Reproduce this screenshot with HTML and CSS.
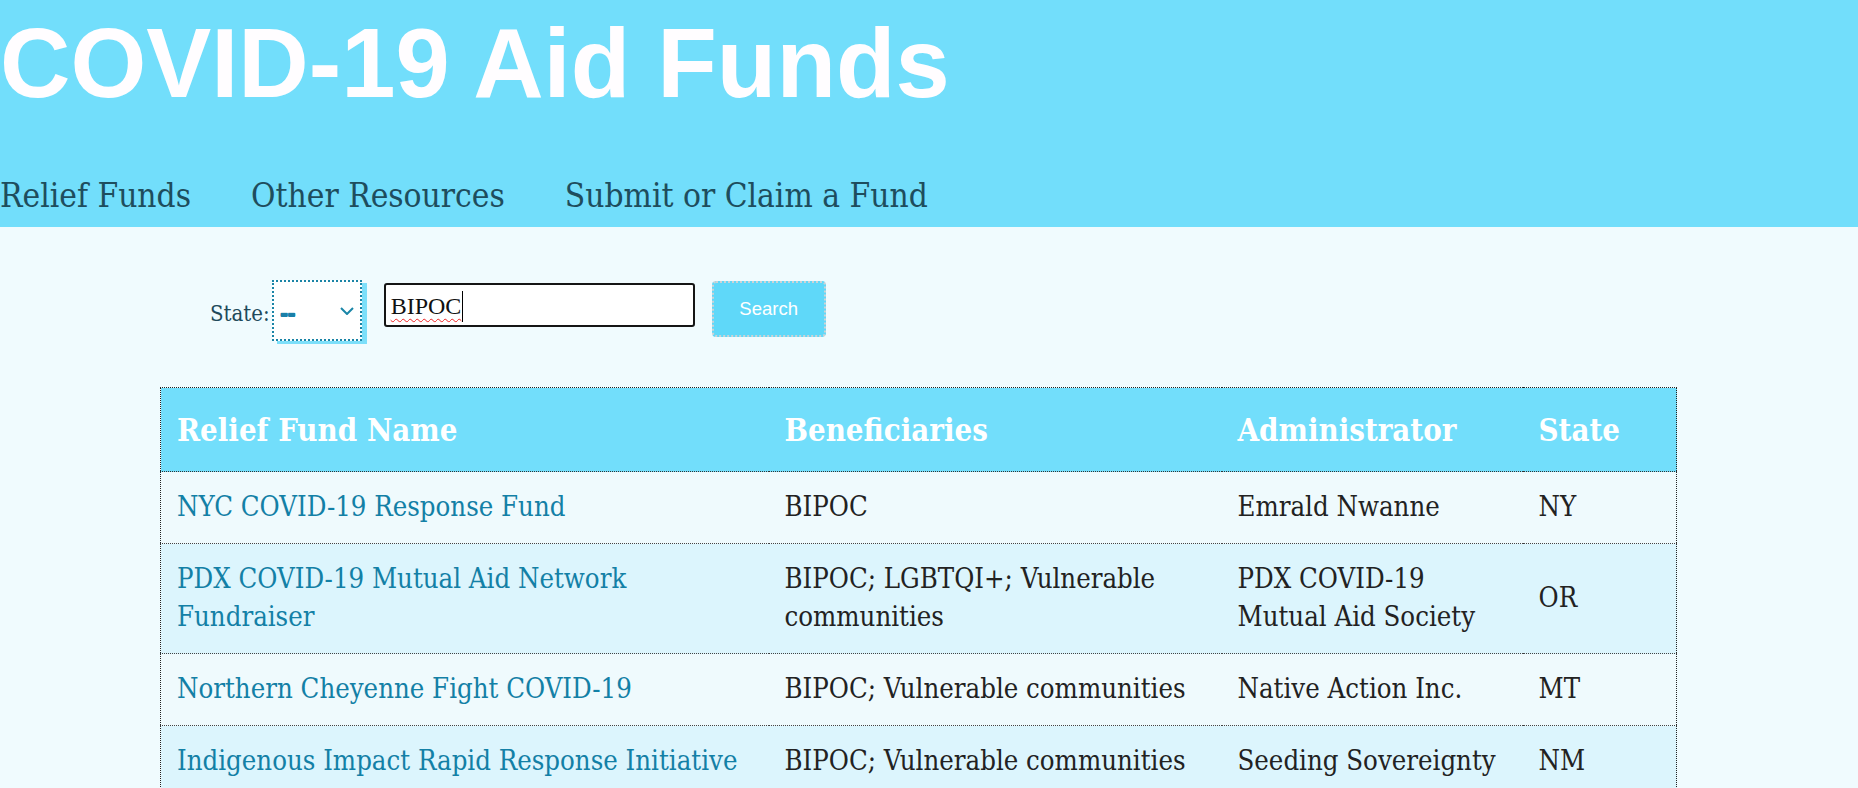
FILE: index.html
```html
<!DOCTYPE html>
<html lang="en">
<head>
<meta charset="utf-8">
<title>COVID-19 Aid Funds</title>
<link rel="stylesheet" href="styles.css">
</head>
<body>
<header class="site-header">
  <h1 class="site-title">COVID-19 Aid Funds</h1>
  <nav class="site-nav">
    <a class="nav-link" href="#">Relief Funds</a>
    <a class="nav-link" href="#">Other Resources</a>
    <a class="nav-link" href="#">Submit or Claim a Fund</a>
  </nav>
</header>
<main class="content">
  <form class="search-form">
    <label class="state-label">State:</label>
    <div class="state-select">
      <span class="state-value">--</span>
      <svg class="chevron" width="14" height="8" viewBox="0 0 14 8"><polyline points="1,1 7,7 13,1" fill="none" stroke="#1a86a8" stroke-width="2"/></svg>
    </div>
    <div class="search-input"><span class="typed">BIPOC</span><span class="caret"></span></div>
    <div class="search-button">Search</div>
  </form>
  <table class="funds">
    <colgroup>
      <col class="c1"><col class="c2"><col class="c3"><col class="c4">
    </colgroup>
    <thead>
      <tr><th>Relief Fund Name</th><th>Beneficiaries</th><th>Administrator</th><th>State</th></tr>
    </thead>
    <tbody>
      <tr><td><a href="#">NYC COVID-19 Response Fund</a></td><td>BIPOC</td><td>Emrald Nwanne</td><td>NY</td></tr>
      <tr><td><a href="#">PDX COVID-19 Mutual Aid Network<br>Fundraiser</a></td><td>BIPOC; LGBTQI+; Vulnerable<br>communities</td><td>PDX COVID-19<br>Mutual Aid Society</td><td>OR</td></tr>
      <tr><td><a href="#">Northern Cheyenne Fight COVID-19</a></td><td>BIPOC; Vulnerable communities</td><td>Native Action Inc.</td><td>MT</td></tr>
      <tr><td><a href="#">Indigenous Impact Rapid Response Initiative</a></td><td>BIPOC; Vulnerable communities</td><td>Seeding Sovereignty</td><td>NM</td></tr>
    </tbody>
  </table>
</main>
</body>
</html>
```
FILE: styles.css
```css
html, body {
  margin: 0;
  padding: 0;
}
body {
  background: #f0fbfe;
  font-family: "DejaVu Serif Condensed", "DejaVu Serif", serif;
  color: #222;
}
.site-header {
  background: #72defb;
  padding: 9px 0 12px 0;
}
.site-title {
  margin: 0;
  font-family: "Liberation Sans", Arial, sans-serif;
  font-weight: 700;
  font-size: 97.5px;
  line-height: 110px;
  color: #fffdff;
}
.site-nav {
  display: flex;
  gap: 60px;
  margin-top: 58px;
  line-height: 38px;
}
.nav-link {
  font-size: 33.2px;
  color: #1e4d5d;
  text-decoration: none;
}
.content {
  padding-top: 53px;
}
.search-form {
  display: flex;
  align-items: flex-start;
  margin: 0 0 0 210px;
  height: 61px;
}
.state-label {
  font-size: 22px;
  line-height: 26px;
  margin-top: 21px;
  color: #21495a;
}
.state-select {
  box-sizing: border-box;
  width: 90px;
  height: 61px;
  margin-left: 2px;
  border: 2px dotted #1a84a6;
  background: #fff;
  box-shadow: 5px 3px 0 #7ddffa;
  display: flex;
  align-items: center;
  justify-content: space-between;
  padding: 4px 6px 0 6px;
}
.state-value {
  font-family: "Liberation Sans", Arial, sans-serif;
  font-weight: 700;
  font-size: 26px;
  letter-spacing: -1px;
  color: #1a7fa8;
  margin-top: -1px;
  text-shadow: 0 1px 0 #1a7fa8, 0 -0.5px 0 #1a7fa8;
}
.chevron {
  margin-top: -4px;
}
.search-input {
  box-sizing: border-box;
  width: 311px;
  height: 44px;
  margin-left: 22px;
  margin-top: 3px;
  border: 2px solid #151515;
  border-radius: 3px;
  background: #fff;
  display: flex;
  align-items: center;
  padding: 2px 0 0 5px;
  font-family: "Liberation Serif", "Times New Roman", serif;
  font-size: 24px;
  color: #111;
}
.typed {
  text-decoration: underline wavy #e22;
  text-decoration-thickness: 1px;
  text-underline-offset: 4px;
}
.caret {
  display: inline-block;
  width: 1px;
  height: 31px;
  background: #000;
  margin-left: 1px;
}
.search-button {
  box-sizing: border-box;
  width: 114px;
  height: 56px;
  margin-left: 17px;
  margin-top: 1px;
  background: #5fd8f9;
  border: 2px dotted #cdd3d6;
  border-radius: 4px;
  color: #fff;
  font-family: "Liberation Sans", Arial, sans-serif;
  font-size: 18.5px;
  display: flex;
  align-items: center;
  justify-content: center;
}
.funds {
  margin: 46px 0 0 160px;
  width: 1516px;
  table-layout: fixed;
  border-collapse: collapse;
  border: 1px dotted #222;
}
.c1 { width: 608px; }
.c2 { width: 453px; }
.c3 { width: 301px; }
.c4 { width: 154px; }
.funds thead tr {
  background: #72defb;
}
.funds th {
  text-align: left;
  color: #fff;
  font-weight: 700;
  font-size: 30.9px;
  line-height: 50px;
  padding: 17px 16px 16px 16px;
  border-bottom: 1px dotted #333;
}
.funds td {
  font-size: 27.3px;
  line-height: 38px;
  padding: 16px 16px 17px 16px;
  border-bottom: 1px dotted #444;
  vertical-align: middle;
  color: #222;
}
.funds tbody tr:nth-child(odd) {
  background: #effafd;
}
.funds tbody tr:nth-child(even) {
  background: #dcf5fd;
}
.funds td a {
  color: #1380a6;
  text-decoration: none;
}
```
